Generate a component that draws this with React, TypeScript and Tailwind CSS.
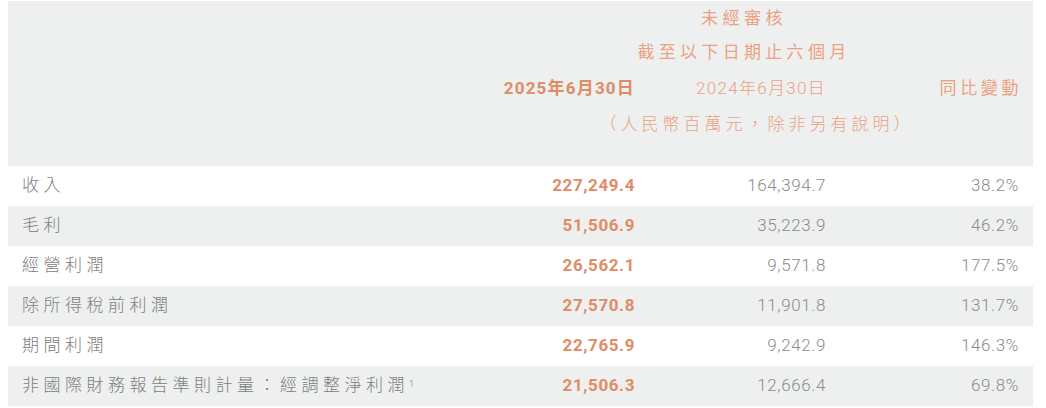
const rows = [
  { label: "收入", a: "227,249.4", b: "164,394.7", c: "38.2%" },
  { label: "毛利", a: "51,506.9", b: "35,223.9", c: "46.2%" },
  { label: "經營利潤", a: "26,562.1", b: "9,571.8", c: "177.5%" },
  { label: "除所得稅前利潤", a: "27,570.8", b: "11,901.8", c: "131.7%" },
  { label: "期間利潤", a: "22,765.9", b: "9,242.9", c: "146.3%" },
  { label: "非國際財務報告準則計量：經調整淨利潤", a: "21,506.3", b: "12,666.4", c: "69.8%", note: "1" },
];

const font = "font-['Roboto','Noto_Sans_CJK_TC',sans-serif]";

export default function App() {
  return (
    <div className={`w-[1046px] h-[408px] bg-white pt-px pl-[8px] pr-[13px] ${font}`}>
      {/* header */}
      <div className="grid grid-cols-[447px_190px_191px_197px] content-start bg-[#eef0ef] h-[165px] text-[17px] text-[#eba182]">
        <div className="col-start-2 col-span-3 h-[34px] pt-[5px] text-center tracking-[4.5px] leading-[24px]">未經審核</div>
        <div className="col-start-2 col-span-3 h-[35px] pt-[5px] text-center tracking-[4.3px] leading-[24px]">截至以下日期止六個月</div>
        <div className="col-start-2 h-[35px] pt-[6px] pr-[10px] text-right font-bold tracking-[1.2px] text-[#e08c66] leading-[24px]">2025年6月30日</div>
        <div className="h-[35px] pt-[6px] pr-[10px] text-right font-light tracking-[1.3px] leading-[24px]">2024年6月30日</div>
        <div className="h-[35px] pt-[6px] pr-[11px] text-right tracking-[3.6px] leading-[24px]">同比變動</div>
        <div className="col-start-2 col-span-3 pl-[26px] pt-[7px] text-center font-light tracking-[4px] leading-[24px]">（人民幣百萬元，除非另有說明）</div>
      </div>
      {/* body */}
      {rows.map((r, i) => (
        <div
          key={r.label}
          className={`grid grid-cols-[447px_190px_191px_197px] h-[40px] items-center text-[17px] ${
            i % 2 === 1 ? "bg-[#eef0ef]" : "bg-white"
          }`}
        >
          <div className="pl-[14px] font-light tracking-[4.5px] text-[#7d7d7d] whitespace-nowrap">
            {r.label}
            {r.note && <sup className="text-[9px] tracking-normal">{r.note}</sup>}
          </div>
          <div className="pr-[10px] text-right font-bold tracking-[0.6px] text-[#e08c66]">{r.a}</div>
          <div className="pr-[10px] text-right font-light tracking-[0.6px] text-[#8b8b8b]">{r.b}</div>
          <div className="pr-[14px] text-right font-light tracking-[0.6px] text-[#8b8b8b]">{r.c}</div>
        </div>
      ))}
    </div>
  );
}
